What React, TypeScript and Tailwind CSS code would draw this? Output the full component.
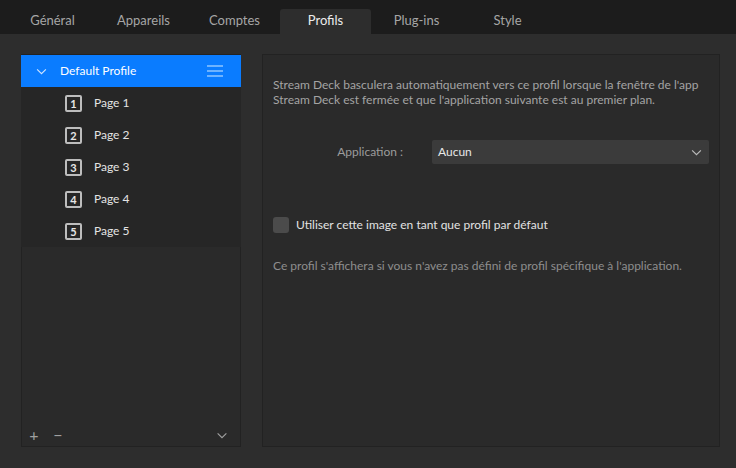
import React from "react";

const font = { fontFamily: 'Lato, "Noto Sans", sans-serif' };

const tabs = ["Général", "Appareils", "Comptes", "Profils", "Plug-ins", "Style"];

function Chevron({ className = "" }: { className?: string }) {
  return (
    <svg viewBox="0 0 12 8" className={className} fill="none" stroke="currentColor" strokeWidth="1.3">
      <path d="M1 1.5 L6 6.5 L11 1.5" />
    </svg>
  );
}

export default function App() {
  return (
    <div className="w-[736px] h-[468px] bg-[#2d2d2d] flex flex-col overflow-hidden text-[12px]" style={font}>
      <div className="h-[34px] bg-[#1c1c1c] flex items-end pl-[7px] shrink-0">
        {tabs.map((t) => (
          <div
            key={t}
            className={
              t === "Profils"
                ? "w-[91px] h-[25px] flex items-center justify-center text-[13px] text-[#ececec] bg-[#2d2d2d] rounded-t-[3px] pb-[1px]"
                : "w-[91px] h-[25px] flex items-center justify-center text-[13px] text-[#a6a6a6] pb-[1px]"
            }
          >
            {t}
          </div>
        ))}
      </div>
      <div className="flex-1 flex pt-[20px] pb-[21px] pl-[21px] pr-[16px] gap-[21px]">
        <div className="w-[220px] bg-[#2a2a2a] border border-[#222] flex flex-col">
          <div className="h-[32px] bg-[#0a7cff] flex items-center pl-[15px] pr-[18px] text-white -mx-px">
            <Chevron className="w-[11px] h-[7px] text-[#cfe4ff]" />
            <span className="ml-[13px]">Default Profile</span>
            <div className="ml-auto flex flex-col gap-[3px]">
              <div className="w-[16px] h-[2px] bg-[#6db3ff]" />
              <div className="w-[16px] h-[2px] bg-[#6db3ff]" />
              <div className="w-[16px] h-[2px] bg-[#6db3ff]" />
            </div>
          </div>
          <div className="bg-[#262626] -mx-px">
            {[1, 2, 3, 4, 5].map((n) => (
              <div key={n} className="h-[32px] flex items-center pl-[44px]">
                <div className="w-[17px] h-[17px] border-2 border-[#bdbdbd] rounded-[2px] flex items-center justify-center text-[11px] font-bold text-[#e6e6e6] leading-none">
                  {n}
                </div>
                <span className="ml-[12px] text-[#e4e4e4]">Page {n}</span>
              </div>
            ))}
          </div>
          <div className="flex-1" />
          <div className="h-[24px] flex items-center pr-[12px] text-[#a0a0a0] mb-[-1px]">
            <span className="text-[16px] leading-none w-[24px] text-center">+</span>
            <span className="text-[16px] leading-none w-[24px] text-center">−</span>
            <Chevron className="ml-auto w-[12px] h-[7px]" />
          </div>
        </div>
        <div className="flex-1 bg-[#2a2a2a] border border-[#222] pt-[22px] px-[10px]">
          <p className="text-[#a4a4a4] leading-[15px] whitespace-nowrap">
            Stream Deck basculera automatiquement vers ce profil lorsque la fenêtre de l'app
            <br />
            Stream Deck est fermée et que l'application suivante est au premier plan.
          </p>
          <div className="mt-[33px] flex items-center">
            <span className="w-[130px] text-right text-[#9c9c9c]">Application :</span>
            <div className="ml-[29px] flex-1 h-[24px] bg-[#3b3b3b] rounded-[2px] flex items-center pl-[6px] pr-[7px] text-[#e8e8e8]">
              Aucun
              <Chevron className="ml-auto w-[11px] h-[7px] text-[#bbb]" />
            </div>
          </div>
          <div className="mt-[52px] flex items-center">
            <div className="w-[16px] h-[16px] bg-[#4b4b4b] rounded-[3px]" />
            <span className="ml-[7px] text-[#e2e2e2]">Utiliser cette image en tant que profil par défaut</span>
          </div>
          <p className="mt-[23px] text-[#8e8e8e] whitespace-nowrap">
            Ce profil s'affichera si vous n'avez pas défini de profil spécifique à l'application.
          </p>
        </div>
      </div>
    </div>
  );
}
